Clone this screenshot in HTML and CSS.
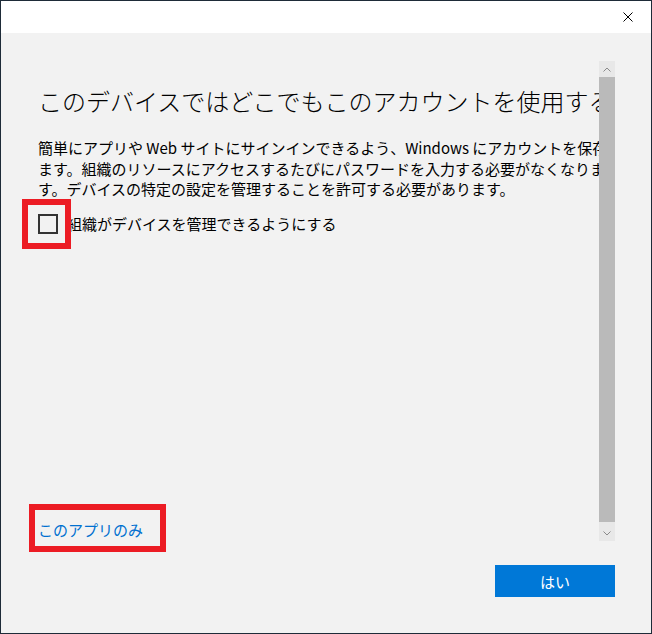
FILE: index.html
```html
<!DOCTYPE html>
<html>
  <head>
    <title>アカウントの追加</title>
    <link rel="stylesheet" href="styles.css">
  </head>
  <body>
    <div class="window">
      <div class="titlebar">
        <button class="close" aria-label="閉じる">
          <svg width="10" height="10" viewBox="0 0 10 10">
            <path d="M0.5 0.5 L9.5 9.5 M9.5 0.5 L0.5 9.5" stroke="#000" stroke-width="1" fill="none"/>
          </svg>
        </button>
      </div>
      <div class="content">
        <div class="scroller">
          <div class="main">
            <h1 class="heading">このデバイスではどこでもこのアカウントを使用する</h1>
            <p class="desc">簡単にアプリや Web サイトにサインインできるよう、Windows にアカウントを保存し<br>ます。組織のリソースにアクセスするたびにパスワードを入力する必要がなくなりま<br>す。デバイスの特定の設定を管理することを許可する必要があります。</p>
            <label class="check">
              <span class="box mark mark-box"></span>
              <span>組織がデバイスを管理できるようにする</span>
            </label>
            <div class="bottom">
              <a class="link mark mark-link" href="#">このアプリのみ</a>
            </div>
          </div>
          <div class="scrollbar">
            <div class="arrow up">
              <svg width="8" height="5" viewBox="0 0 8 5"><path d="M0.5 4.5 L4 1 L7.5 4.5" stroke="#8a8a8a" fill="none"/></svg>
            </div>
            <div class="thumb"></div>
            <div class="arrow down">
              <svg width="8" height="5" viewBox="0 0 8 5"><path d="M0.5 0.5 L4 4 L7.5 0.5" stroke="#8a8a8a" fill="none"/></svg>
            </div>
          </div>
        </div>
        <div class="footer">
          <button class="primary">はい</button>
        </div>
      </div>
    </div>
  </body>
</html>
```

FILE: styles.css
```css
html, body {
  margin: 0;
  padding: 0;
}
body {
  font-family: "Noto Sans CJK JP", "Noto Sans", sans-serif;
  color: #000;
}
.window {
  width: 652px;
  height: 634px;
  box-sizing: border-box;
  border: 1px solid #1e2b38;
  display: flex;
  flex-direction: column;
  background: #f2f2f2;
}
.titlebar {
  height: 32px;
  background: #fff;
  display: flex;
  justify-content: flex-end;
  align-items: center;
}
.close {
  border: 0;
  background: transparent;
  padding: 0;
  width: 46px;
  height: 32px;
  display: flex;
  align-items: center;
  justify-content: center;
}
.close svg {
  display: block;
}
.content {
  flex: 1;
  display: flex;
  flex-direction: column;
  padding-top: 28px;
}
.scroller {
  height: 480px;
  display: flex;
  padding-right: 36px;
}
.main {
  flex: 1;
  min-width: 0;
  overflow-x: clip;
  overflow-y: visible;
  padding: 24px 0 0 37px;
  display: flex;
  flex-direction: column;
}
.heading {
  margin: 0;
  font-size: 24px;
  font-weight: 300;
  line-height: 32px;
  white-space: nowrap;
}
.desc {
  margin: 21px 0 0;
  font-size: 15px;
  line-height: 20.5px;
  white-space: nowrap;
}
.check {
  margin-top: 14.5px;
  display: flex;
  align-items: center;
  gap: 9px;
  font-size: 15px;
  line-height: 20px;
}
.box {
  width: 20px;
  height: 20px;
  box-sizing: border-box;
  border: 2px solid #333;
  flex: none;
}
.bottom {
  margin-top: auto;
}
.link {
  display: inline-block;
  font-size: 15px;
  line-height: 20px;
  color: #0070d0;
  text-decoration: none;
}
.mark {
  position: relative;
}
.mark::after {
  content: "";
  position: absolute;
  box-sizing: border-box;
  border: 6px solid #ec1c24;
}
.mark-box::after {
  top: -17px;
  left: -18px;
  width: 49px;
  height: 50px;
}
.mark-link::after {
  top: -16px;
  left: -9px;
  width: 137px;
  height: 48px;
}
.scrollbar {
  width: 16px;
  display: flex;
  flex-direction: column;
}
.arrow {
  background: #e8e8e8;
  display: flex;
  justify-content: center;
  align-items: center;
}
.arrow svg {
  display: block;
}
.arrow.up {
  height: 16px;
}
.arrow.down {
  height: 19px;
  padding-top: 3px;
  box-sizing: border-box;
}
.thumb {
  flex: 1;
  background: #bababa;
}
.footer {
  display: flex;
  justify-content: flex-end;
  padding: 24px 36px 0 0;
}
.primary {
  width: 120px;
  height: 32px;
  border: 0;
  background: #0078d7;
  color: #fff;
  font-family: "Noto Sans CJK JP", "Noto Sans", sans-serif;
  font-size: 15px;
  padding: 0;
}
```
